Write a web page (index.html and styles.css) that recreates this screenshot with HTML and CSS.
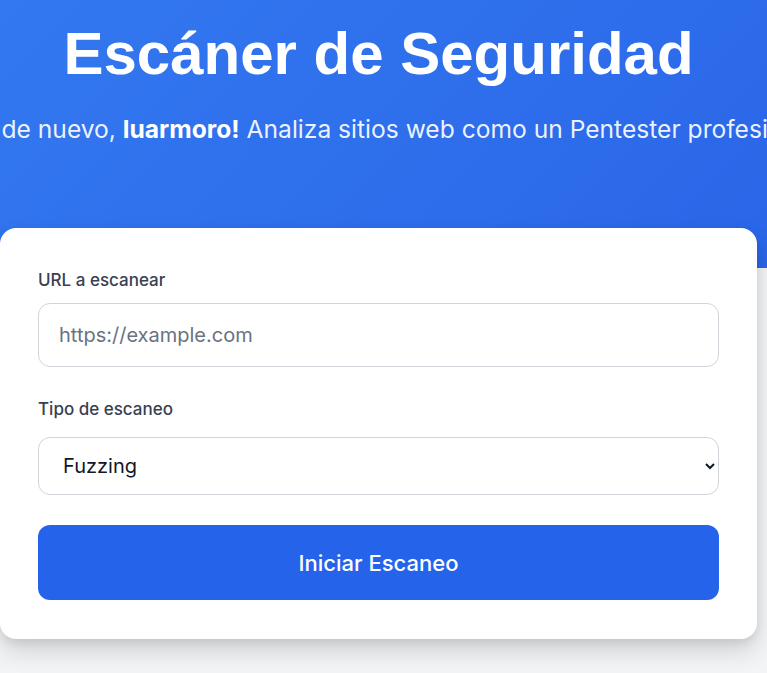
FILE: index.html
```html
<!DOCTYPE html>
<html lang="es">
<head>
<meta charset="utf-8">
<title>Escáner de Seguridad</title>
<link rel="stylesheet" href="styles.css">
</head>
<body>
  <header class="hero">
    <div class="hero-inner">
      <h1 class="hero-title">Escáner de Seguridad</h1>
      <div class="hero-sub-wrap">
        <p class="hero-sub">¡Bienvenido de nuevo, <strong>luarmoro!</strong> Analiza sitios web como un Pentester profesional</p>
      </div>
    </div>
  </header>
  <main class="main">
    <form class="card">
      <div class="field">
        <label class="label" for="url">URL a escanear</label>
        <input class="input" id="url" type="text" placeholder="https://example.com">
      </div>
      <div class="field field-select">
        <label class="label" for="tipo">Tipo de escaneo</label>
        <select class="select" id="tipo">
          <option>Fuzzing</option>
          <option>Escaneo de puertos</option>
          <option>XSS</option>
        </select>
      </div>
      <button class="btn" type="button">Iniciar Escaneo</button>
    </form>
  </main>
</body>
</html>
```

FILE: styles.css
```css
* { box-sizing: border-box; }
html, body { margin: 0; padding: 0; }
html { background: #f3f4f6; }
body {
  font-family: "Inter", "Noto Sans", sans-serif;
  color: #111827;
  overflow: hidden;
  min-height: 673px;
}
.hero {
  height: 268px;
  background: linear-gradient(135deg, #3378f0 0%, #2a66e8 100%);
  overflow: hidden;
  color: #ffffff;
}
.hero-inner {
  width: 757px;
  padding-top: 24px;
}
.hero-title {
  margin: 0;
  font-family: "Liberation Sans", Arial, sans-serif;
  font-weight: 700;
  font-size: 60px;
  line-height: 60px;
  text-align: center;
}
.hero-sub-wrap {
  display: flex;
  justify-content: flex-start;
  margin-top: 29px;
}
.hero-sub {
  margin: 0 0 0 -141px;
  flex: none;
  white-space: nowrap;
  font-size: 24.6px;
  line-height: 32px;
  color: rgba(255, 255, 255, 0.93);
}
.hero-sub strong { font-weight: 700; color: #ffffff; }
.main {
  margin-top: -40px;
  padding-bottom: 40px;
}
.card {
  position: relative;
  width: 757px;
  background: #ffffff;
  border-radius: 16px;
  box-shadow: 0 12px 24px rgba(0, 0, 0, 0.14), 0 4px 10px rgba(0, 0, 0, 0.08);
  padding: 40px 38px 39px;
  display: flex;
  flex-direction: column;
}
.field {
  display: flex;
  flex-direction: column;
}
.field + .field { margin-top: 30px; }
.label {
  font-size: 17px;
  line-height: 24px;
  font-weight: 500;
  color: #374151;
  margin-bottom: 11px;
}
.field-select .label { margin-bottom: 16px; }
.input, .select {
  width: 100%;
  border: 1px solid #d1d5db;
  border-radius: 12px;
  background: #ffffff;
  font-family: "Inter", sans-serif;
  font-size: 20px;
  padding: 0 20px;
  color: #111827;
}
.input { height: 64px; }
.input::placeholder { color: #6b7280; }
.select { height: 58px; }
.btn {
  margin-top: 30px;
  height: 75px;
  border: 0;
  border-radius: 12px;
  background: #2563eb;
  color: #ffffff;
  font-family: "Inter", sans-serif;
  font-size: 22px;
  font-weight: 500;
}
```
